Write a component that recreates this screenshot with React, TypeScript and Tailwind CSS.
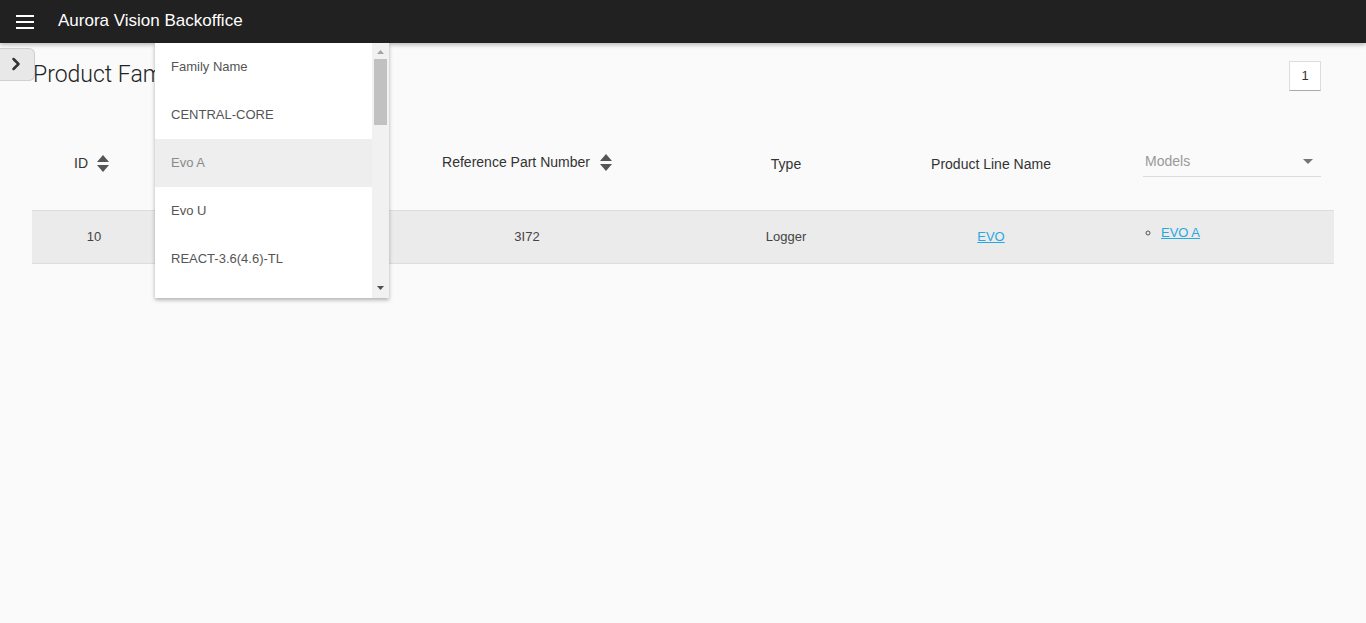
import { ChevronRight } from 'lucide-react'

const families = ['Family Name', 'CENTRAL-CORE', 'Evo A', 'Evo U', 'REACT-3.6(4.6)-TL']

function SortIcon({ gap = 'ml-[10px]' }: { gap?: string }) {
  return (
    <svg width="12" height="17" viewBox="0 0 12 17" className={gap + ' inline-block'}>
      <path d="M6 0 L12 7 L0 7 Z" fill="#555" />
      <path d="M0 10 L12 10 L6 17 Z" fill="#555" />
    </svg>
  )
}

function FamilyDropdown() {
  return (
    <div className="absolute left-[155px] top-[43px] w-[234px] h-[255px] bg-white shadow-[0_2px_4px_rgba(0,0,0,0.3)] flex overflow-hidden z-20">
      {/* Options */}
      <div className="flex-1 flex flex-col">
        {families.map((f, i) => (
          <div
            key={f}
            className={
              i === 2
                ? 'h-[48px] shrink-0 flex items-center pl-[16px] text-[13px] text-[#8a8a8a] bg-[#eeeeee]'
                : 'h-[48px] shrink-0 flex items-center pl-[16px] text-[13px] text-[#555]'
            }
          >
            {f}
          </div>
        ))}
      </div>
      {/* Scrollbar */}
      <div className="w-[17px] h-full bg-[#f1f1f1] relative">
        <svg width="17" height="14" viewBox="0 0 17 14" className="absolute top-[1px] left-0">
          <path d="M5 10 L12 10 L8.5 6 Z" fill="#a3a3a3" />
        </svg>
        <div className="absolute left-[2px] top-[16px] w-[13px] h-[66px] bg-[#c1c1c1]" />
        <svg width="17" height="14" viewBox="0 0 17 14" className="absolute bottom-[2px] left-0">
          <path d="M5 4 L12 4 L8.5 8 Z" fill="#505050" />
        </svg>
      </div>
    </div>
  )
}

export default function App() {
  return (
    <div className="relative min-h-[623px] bg-[#fafafa] font-['Liberation_Sans',Arial,sans-serif] text-[#333]">
      {/* Top bar */}
      <div className="h-[43px] bg-[#212121] flex items-center shadow-[0_2px_4px_rgba(0,0,0,0.25)] relative z-10">
        <div className="ml-[16px] w-[18px] flex flex-col gap-[4px]">
          <div className="h-[2px] bg-white" />
          <div className="h-[2px] bg-white" />
          <div className="h-[2px] bg-white" />
        </div>
        <span className="ml-[24px] -mt-[2px] text-white text-[17px]">Aurora Vision Backoffice</span>
      </div>

      {/* Side toggle */}
      <div className="absolute left-0 top-[48px] w-[35px] h-[33px] bg-[#e8e8e8] border border-l-0 border-[#cfcfcf] rounded-r-[6px] flex items-center justify-center z-10">
        <ChevronRight size={20} strokeWidth={3} className="text-[#333] -ml-[3px] -mt-[1px]" />
      </div>

      <div className="px-[32px]">
        {/* Title row */}
        <div className="mt-[18px] flex items-center justify-between h-[30px]">
          <h1 className="ml-[1px] -mt-[2px] text-[23px] font-['Roboto',sans-serif] font-light text-[#222]">Product Families</h1>
          <div className="mr-[13px] w-[32px] h-[30px] bg-white border border-[#ddd] border-b-[#aaa] flex items-center justify-center text-[13px] text-[#333]">
            1
          </div>
        </div>

        {/* Table */}
        <div className="mt-[26px]">
          <div className="grid grid-cols-[124px_214px_314px_204px_206px_1fr] h-[94px] items-center border-b border-[#dddddd] text-[14px] text-[#333]">
            <div className="flex items-center justify-center -ml-[5px]">
              ID <SortIcon gap="ml-[9px]" />
            </div>
            <div />
            <div className="flex items-center justify-center -mt-[2px]">
              Reference Part Number <SortIcon />
            </div>
            <div className="text-center pt-[2px]">Type</div>
            <div className="text-center pt-[2px]">Product Line Name</div>
            <div className="pl-[49px] pr-[13px] -mt-[4px]">
              <div className="border-b border-[#ddd] h-[30px] flex items-center justify-between pl-[2px] pr-[8px]">
                <span className="text-[#999]">Models</span>
                <svg width="10" height="5" viewBox="0 0 10 5">
                  <path d="M0 0 L10 0 L5 5 Z" fill="#757575" />
                </svg>
              </div>
            </div>
          </div>
          <div className="grid grid-cols-[124px_214px_314px_204px_206px_1fr] h-[53px] items-center bg-[#ebebeb] border-b border-[#dddddd] text-[13px] text-[#444]">
            <div className="text-center">10</div>
            <div />
            <div className="text-center">3I72</div>
            <div className="text-center">Logger</div>
            <div className="text-center">
              <a href="#" className="text-[#29a8df] underline">EVO</a>
            </div>
            <ul className="pl-[67px] -mt-[8px] list-[circle]">
              <li className="marker:text-[#555]">
                <a href="#" className="text-[#29a8df] underline">EVO A</a>
              </li>
            </ul>
          </div>
        </div>
      </div>

      <FamilyDropdown />
    </div>
  )
}
